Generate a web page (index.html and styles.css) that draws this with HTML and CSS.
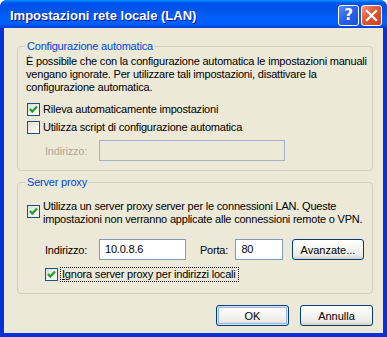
FILE: index.html
```html
<!DOCTYPE html>
<html>
  <head>
    <title>Impostazioni rete locale (LAN)</title>
    <link rel="stylesheet" href="styles.css">
  </head>
  <body>
    <div class="window">
      <div class="titlebar">
        <span class="title">Impostazioni rete locale (LAN)</span>
        <div class="title-buttons">
          <span class="tb help">?</span>
          <span class="tb close">
            <svg width="13" height="13" viewBox="0 0 13 13">
              <path d="M2 2 L11 11 M11 2 L2 11" stroke="#fff" stroke-width="2.2" stroke-linecap="square" />
            </svg>
          </span>
        </div>
      </div>
      <div class="client">
        <fieldset class="group">
          <legend>Configurazione automatica</legend>
          <p class="note">
            È possibile che con la configurazione automatica le impostazioni manuali<br>
            vengano ignorate. Per utilizzare tali impostazioni, disattivare la<br>
            configurazione automatica.
          </p>
          <label class="check first">
            <span class="box checked">
              <svg width="11" height="11" viewBox="0 0 11 11"><path d="M2 5 L4.3 7.6 L9 2.6" fill="none" stroke="#21a121" stroke-width="2.2" /></svg>
            </span>
            <span>Rileva automaticamente impostazioni</span>
          </label>
          <label class="check second">
            <span class="box"></span>
            <span>Utilizza script di configurazione automatica</span>
          </label>
          <div class="field-row disabled">
            <span class="field-label">Indirizzo:</span>
            <span class="textbox script-addr"></span>
          </div>
        </fieldset>

        <fieldset class="group proxy">
          <legend>Server proxy</legend>
          <label class="check multi">
            <span class="box checked">
              <svg width="11" height="11" viewBox="0 0 11 11"><path d="M2 5 L4.3 7.6 L9 2.6" fill="none" stroke="#21a121" stroke-width="2.2" /></svg>
            </span>
            <span>Utilizza un server proxy server per le connessioni LAN. Queste<br>impostazioni non verranno applicate alle connessioni remote o VPN.</span>
          </label>
          <div class="field-row proxy-row">
            <span class="field-label">Indirizzo:</span>
            <span class="textbox proxy-addr">10.0.8.6</span>
            <span class="port-label">Porta:</span>
            <span class="textbox port">80</span>
            <button class="btn advanced">Avanzate...</button>
          </div>
          <label class="check bypass">
            <span class="box checked">
              <svg width="11" height="11" viewBox="0 0 11 11"><path d="M2 5 L4.3 7.6 L9 2.6" fill="none" stroke="#21a121" stroke-width="2.2" /></svg>
            </span>
            <span class="focus"><u>I</u>gnora server proxy per indirizzi locali</span>
          </label>
        </fieldset>

        <div class="actions">
          <button class="btn default">OK</button>
          <button class="btn">Annulla</button>
        </div>
      </div>
    </div>
  </body>
</html>
```

FILE: styles.css
```css
* {
  margin: 0;
  padding: 0;
  box-sizing: border-box;
}

html,
body {
  width: 387px;
  height: 337px;
  overflow: hidden;
  background: #ffffff;
}

body {
  font-family: "Liberation Sans", Arial, sans-serif;
  font-size: 11px;
  letter-spacing: -0.2px;
  color: #000;
}

.window {
  width: 387px;
  height: 337px;
  display: flex;
  flex-direction: column;
  background: #0831d9;
  border-radius: 7px 7px 0 0;
  overflow: hidden;
}

.titlebar {
  height: 28px;
  flex: none;
  display: flex;
  align-items: center;
  justify-content: space-between;
  padding: 0 5px 0 10px;
  background: linear-gradient(
    #0997ff 0,
    #0053ee 3px,
    #0050ee 5px,
    #0055e8 10px,
    #0060fc 18px,
    #005ff8 24px,
    #003dd7 28px
  );
}

.title {
  color: #fff;
  font-weight: bold;
  font-size: 13px;
  letter-spacing: 0;
  text-shadow: 1px 1px #0f1089;
  padding-top: 2px;
}

.title-buttons {
  display: flex;
  gap: 2px;
  padding-top: 2px;
}

.tb {
  width: 21px;
  height: 21px;
  border: 1px solid #fff;
  border-radius: 3px;
  display: flex;
  align-items: center;
  justify-content: center;
  color: #fff;
}

.help {
  background: linear-gradient(135deg, #5a8cf6 0, #2b64e8 45%, #1a4fd8 100%);
  font-family: "DejaVu Sans", sans-serif;
  font-weight: bold;
  font-size: 15px;
  letter-spacing: 0;
}

.close {
  background: linear-gradient(135deg, #f29a7c 0, #e35a37 40%, #c9411d 100%);
}

.client {
  flex: 1;
  margin: 0 4px 4px;
  background: #ece9d8;
  padding: 12px 10px 0 13px;
  display: flex;
  flex-direction: column;
}

.group {
  border: 1px solid #d0d0bf;
  border-radius: 4px;
  padding: 2px 8px 9px 8px;
  min-width: 0;
}

.group legend {
  color: #0046d5;
  padding: 0 1px;
  line-height: 13px;
}

.proxy {
  margin-top: 5px;
  padding-top: 11px;
  padding-bottom: 12px;
}

.note {
  line-height: 13px;
  white-space: nowrap;
}

.check {
  display: flex;
  align-items: center;
  gap: 3px;
  line-height: 13px;
  padding-left: 1px;
  white-space: nowrap;
}

.check.first {
  margin-top: 9px;
}

.check.second {
  margin-top: 5px;
}

.check.multi {
  align-items: flex-start;
}

.check.multi .box {
  margin-top: 5px;
}

.check.bypass {
  margin-top: 8px;
  padding-left: 19px;
}

.box {
  width: 13px;
  height: 13px;
  flex: none;
  border: 1px solid #1c5180;
  background: linear-gradient(135deg, #dcdcd7 0, #f4f4f1 60%, #ffffff 100%);
  display: flex;
  align-items: center;
  justify-content: center;
}

.focus {
  outline: 1px dotted #000;
  outline-offset: 0;
  padding: 0 2px 0 1px;
}

.field-row {
  display: flex;
  align-items: center;
  margin-top: 6px;
  padding-left: 19px;
}

.field-label {
  width: 54px;
  flex: none;
}

.disabled .field-label {
  color: #aca899;
}

.textbox {
  height: 21px;
  border: 1px solid #7f9db9;
  background: #fff;
  padding: 0 5px;
  line-height: 19px;
}

.disabled .textbox {
  background: #ece9d8;
  border-color: #9db3cc;
}

.script-addr {
  width: 186px;
}

.proxy-row {
  margin-top: 13px;
}

.proxy-addr {
  width: 88px;
}

.port-label {
  margin-left: 14px;
  width: 36px;
}

.port {
  width: 48px;
}

.btn {
  height: 21px;
  width: 73px;
  font-family: inherit;
  font-size: 11px;
  letter-spacing: 0;
  color: #000;
  border: 1px solid #003c74;
  border-radius: 3px;
  background: linear-gradient(#ffffff 0, #f4f4f0 50%, #ecebe6 80%, #d6d0c5 100%);
}

.advanced {
  margin-left: 9px;
}

.default {
  box-shadow: inset 0 0 0 1px #cee7ff, inset 0 0 0 2px #98b8ea;
}

.actions {
  display: flex;
  justify-content: flex-end;
  gap: 11px;
  margin-top: 11px;
}
```
